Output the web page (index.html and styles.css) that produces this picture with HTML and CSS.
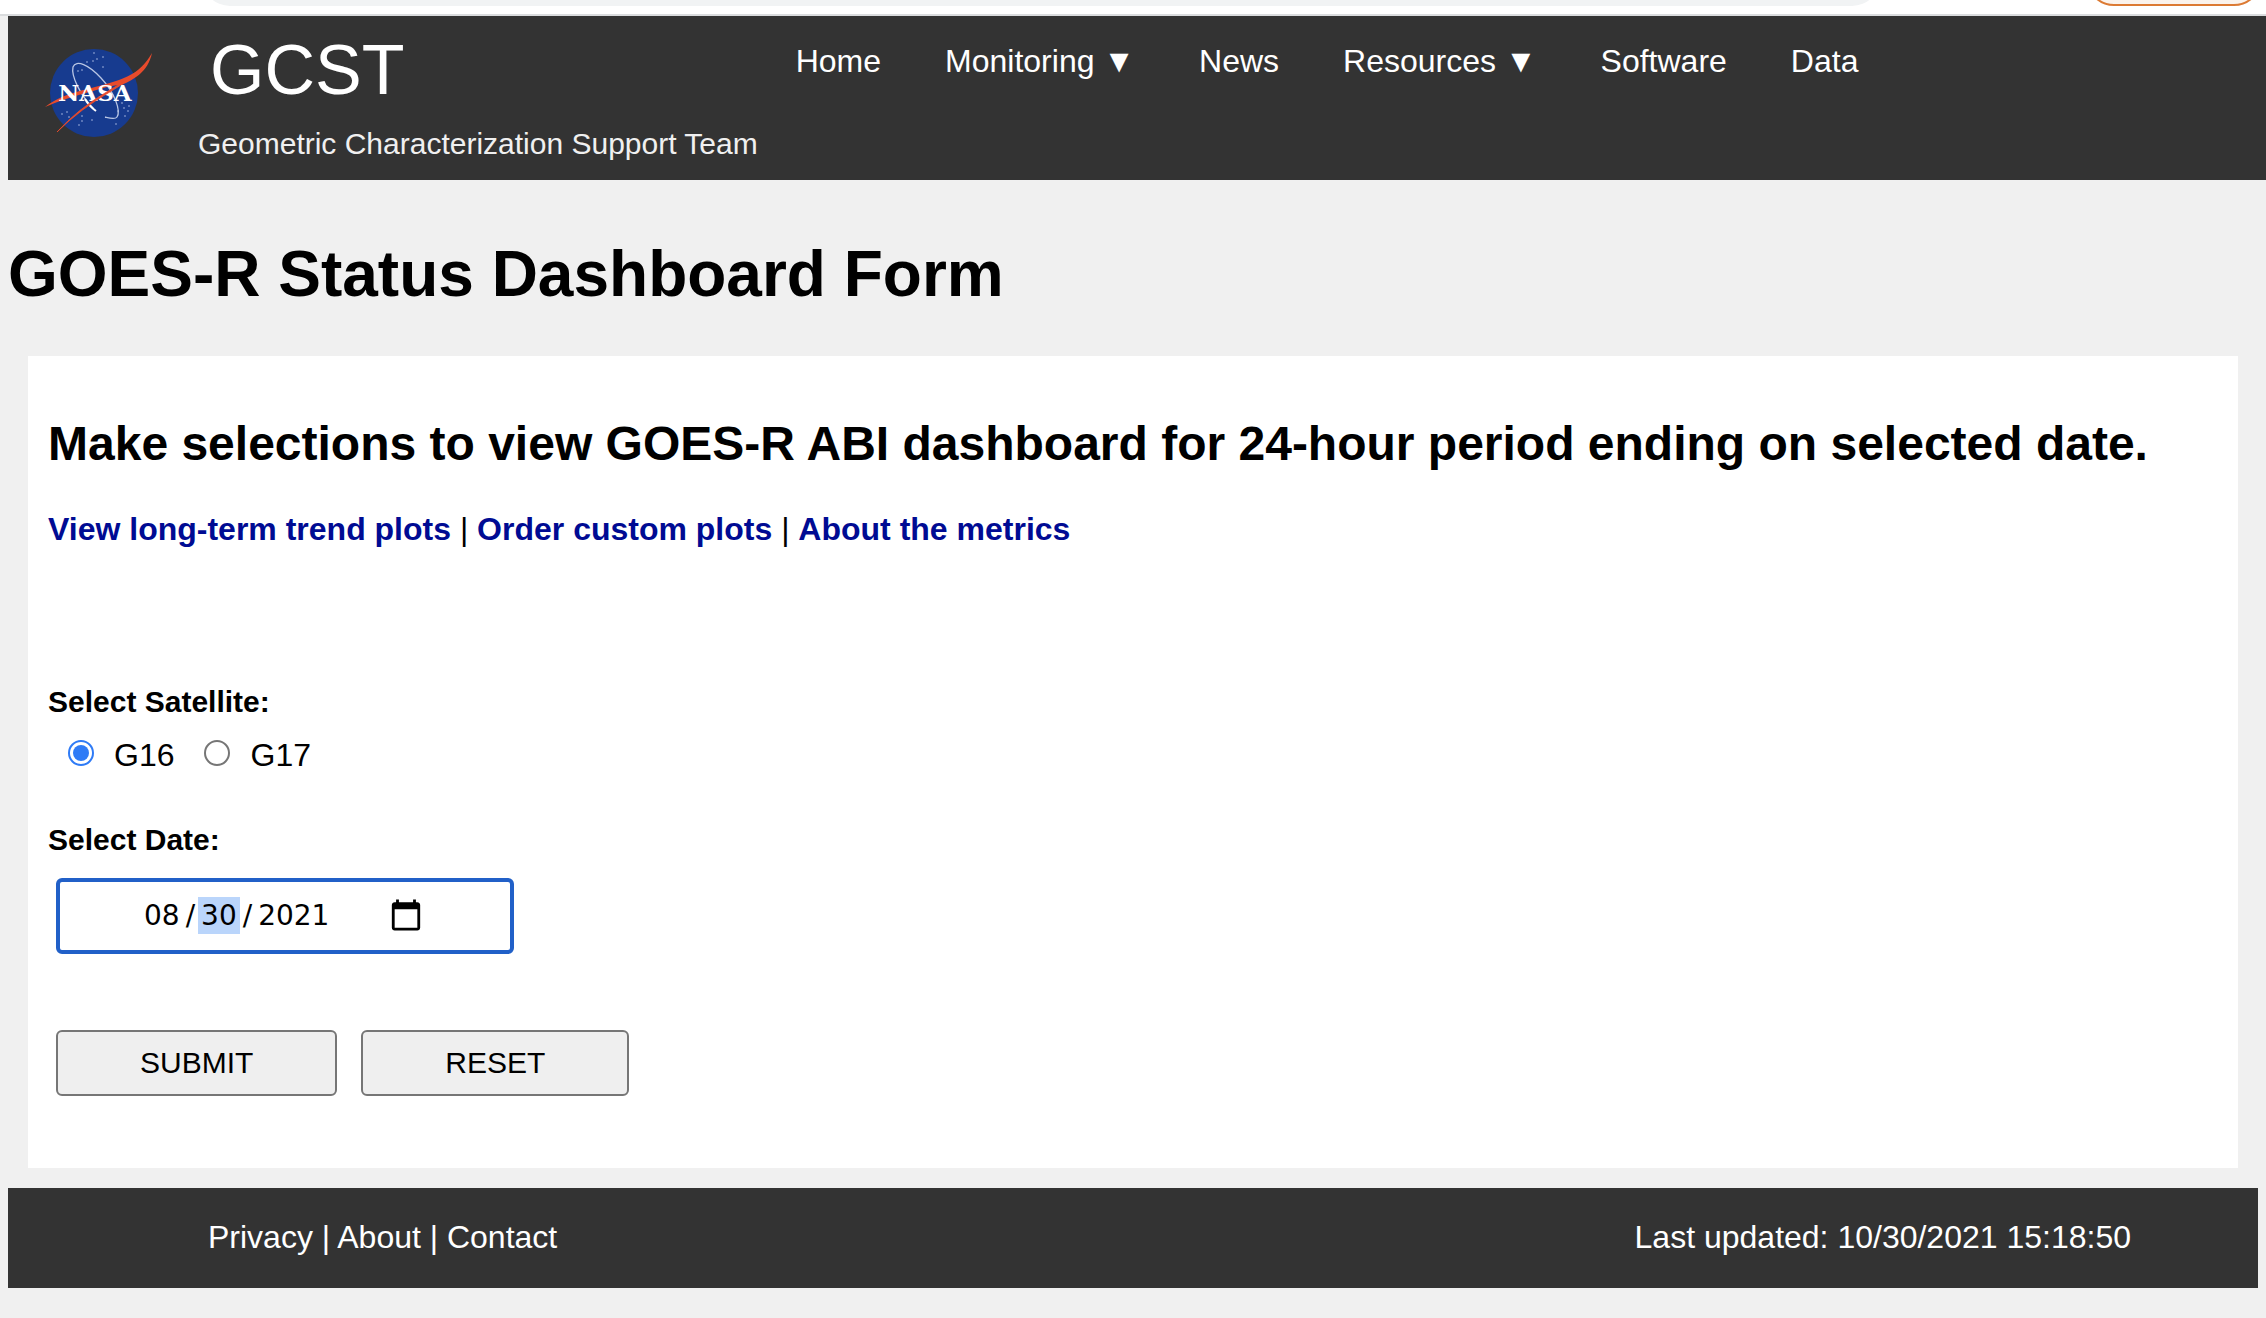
FILE: index.html
```html
<!DOCTYPE html>
<html lang="en">
<head>
<meta charset="utf-8">
<title>GOES-R Status Dashboard Form</title>
<link rel="stylesheet" href="styles.css">
</head>
<body>
<div class="toolbar">
  <div class="address"></div>
  <div class="update"></div>
</div>
<header class="site-header">
  <svg class="logo" viewBox="0 0 112 92" role="img" aria-label="NASA">
    <circle cx="51" cy="46" r="44" fill="#173b8f"/>
    <g fill="#6f87c0">
      <circle cx="51" cy="6" r="1"/><circle cx="60" cy="10" r="1"/><circle cx="54" cy="12" r="1"/><circle cx="50" cy="14" r="1"/><circle cx="44" cy="15" r="1"/><circle cx="60" cy="20" r="1"/><circle cx="39" cy="23" r="1"/><circle cx="35" cy="24" r="1"/>
      <circle cx="24" cy="65" r="1"/><circle cx="19" cy="67" r="1"/><circle cx="26" cy="70" r="1"/><circle cx="39" cy="69" r="1"/><circle cx="39" cy="74" r="1"/><circle cx="49" cy="73" r="1"/><circle cx="36" cy="78" r="1"/><circle cx="73" cy="77" r="1"/><circle cx="82" cy="69" r="1"/><circle cx="86" cy="59" r="1"/><circle cx="81" cy="61" r="1"/><circle cx="85" cy="64" r="1"/><circle cx="75" cy="64" r="1"/><circle cx="79" cy="56" r="1"/>
    </g>
    <path d="M51 62C37 48 28 29 30 20C33 12 46 18 58 31C72 46 78 64 74 70C72 73 66 71 62 70" fill="none" stroke="#b9c6e4" stroke-width="1.3"/>
    <path d="M42 52Q46 59 53 64" fill="none" stroke="#fff" stroke-width="2"/>
    <path d="M2 60Q17 48 45 42C79 33 96 29 109 6C105 25 91 32 79 38Q71 37 50 44Q20 52 2 60Z" fill="#e84b2c"/>
    <text class="logo-text" x="52" y="54" text-anchor="middle">NASA</text>
    <path d="M14 85Q35 62 62 46Q78 37 92 26Q85 34 70 43Q37 62 14 85Z" fill="#e84b2c" stroke="#e84b2c" stroke-width="0.8"/>
  </svg>
  <div class="brand">
    <div class="brand-name">GCST</div>
    <div class="brand-sub">Geometric Characterization Support Team</div>
  </div>
  <nav class="nav">
    <a href="#">Home</a>
    <a href="#">Monitoring ▼</a>
    <a href="#">News</a>
    <a href="#">Resources ▼</a>
    <a href="#">Software</a>
    <a href="#">Data</a>
  </nav>
</header>
<main>
  <h1>GOES-R Status Dashboard Form</h1>
  <section class="card">
    <h2>Make selections to view GOES-R ABI dashboard for 24-hour period ending on selected date.</h2>
    <p class="links"><a href="#">View long-term trend plots</a> | <a href="#">Order custom plots</a> | <a href="#">About the metrics</a></p>
    <form>
      <fieldset>
        <legend>Select Satellite:</legend>
        <div class="radios">
          <label><input type="radio" name="satellite" value="G16" checked>G16</label>
          <label><input type="radio" name="satellite" value="G17">G17</label>
        </div>
      </fieldset>
      <label class="date-label" for="date">Select Date:</label>
      <input class="date" id="date" type="date" value="2021-08-30">
      <div class="actions">
        <button type="submit">SUBMIT</button>
        <button type="reset">RESET</button>
      </div>
    </form>
  </section>
</main>
<footer class="site-footer">
  <div><a href="#">Privacy</a> | <a href="#">About</a> | <a href="#">Contact</a></div>
  <div>Last updated: 10/30/2021 15:18:50</div>
</footer>
</body>
</html>
```
FILE: styles.css
```css
* {
  box-sizing: border-box;
}

body {
  margin: 0;
  background: #f0f0f0;
  color: #000;
  font: 32px/36px "Liberation Sans", Arial, sans-serif;
}

a {
  color: inherit;
  text-decoration: none;
}

/* Bottom edge of the browser toolbar */
.toolbar {
  display: flex;
  align-items: flex-end;
  gap: 206px;
  height: 16px;
  padding: 0 4px 8px 202px;
  overflow: hidden;
  background: #fff;
  border-bottom: 2px solid #dadcde;
}

.address,
.update {
  height: 56px;
  border-radius: 28px;
}

.address {
  flex: 1;
  background: #f1f3f4;
}

.update {
  width: 176px;
  background: #fbf3ec;
  border: 2px solid #dc7a33;
}

.site-header {
  display: flex;
  align-items: flex-start;
  margin-left: 8px;
  padding: 14px 0 18px 35px;
  background: #333;
  color: #fff;
}

.logo {
  width: 112px;
  height: 92px;
  margin-top: 17px;
}

.logo-text {
  font: bold 23px "DejaVu Serif", serif;
  fill: #fff;
}

.brand {
  margin-left: 43px;
}

.brand-name {
  padding-left: 12px;
  font-size: 70px;
  line-height: 80px;
}

.brand-sub {
  margin-top: 16px;
  color: #f0f0f0;
  font-size: 30px;
}

.nav {
  display: flex;
  gap: 64px;
  margin: 13px 0 0 38px;
}

h1 {
  margin: 58px 8px 46px;
  font-size: 64px;
  line-height: 72px;
}

.card {
  margin: 0 28px 20px;
  padding: 60px 20px 72px;
  background: #fff;
}

h2 {
  margin: 0 0 39px;
  font-size: 48px;
  line-height: 56px;
}

.links {
  margin: 0 0 137px;
}

.links a {
  color: #000b93;
  font-weight: bold;
}

fieldset {
  margin: 0 0 49px;
  padding: 0;
  border: 0;
}

legend,
.date-label {
  display: block;
  padding: 0;
  font-size: 30px;
  font-weight: bold;
}

.radios {
  display: flex;
  gap: 30px;
  padding: 17px 0 0 20px;
}

.radios label {
  display: flex;
  align-items: center;
  gap: 20px;
}

.radios input {
  display: grid;
  place-items: center;
  width: 26px;
  height: 26px;
  margin: 0 0 4px;
  appearance: none;
  border: 2px solid #767676;
  border-radius: 50%;
}

.radios input:checked {
  border-color: #2f7bf6;
}

.radios input:checked::before {
  width: 16px;
  height: 16px;
  border-radius: 50%;
  background: #2f7bf6;
  content: "";
}

.date {
  display: flex;
  width: 458px;
  height: 76px;
  margin: 20px 8px 76px;
  padding: 0 60px 0 81px;
  background: #fff;
  border: 4px solid #2160c8;
  border-radius: 6px;
  color: #000;
  font: 28px/38px "DejaVu Sans", sans-serif;
}

.date::-webkit-datetime-edit,
.date::-webkit-datetime-edit-fields-wrapper {
  padding: 0;
}

.date::-webkit-datetime-edit-month-field,
.date::-webkit-datetime-edit-day-field,
.date::-webkit-datetime-edit-year-field {
  padding: 2px 3px;
}

.date::-webkit-datetime-edit-day-field {
  background: #bad5fb;
}

.date::-webkit-datetime-edit-text {
  padding: 0 3px;
}

.date::-webkit-calendar-picker-indicator {
  width: 36px;
  height: 36px;
  margin: 0 0 0 25px;
  padding: 0;
}

.actions {
  display: flex;
  gap: 24px;
  padding-left: 8px;
}

button {
  height: 66px;
  padding: 0 82px;
  background: #efefef;
  border: 2px solid #767676;
  border-radius: 6px;
  color: #000;
  font: 30px/36px "Liberation Sans", Arial, sans-serif;
}

.site-footer {
  display: flex;
  justify-content: space-between;
  margin: 0 8px 30px;
  padding: 31px 127px 33px 200px;
  background: #333;
  color: #fff;
}
```
